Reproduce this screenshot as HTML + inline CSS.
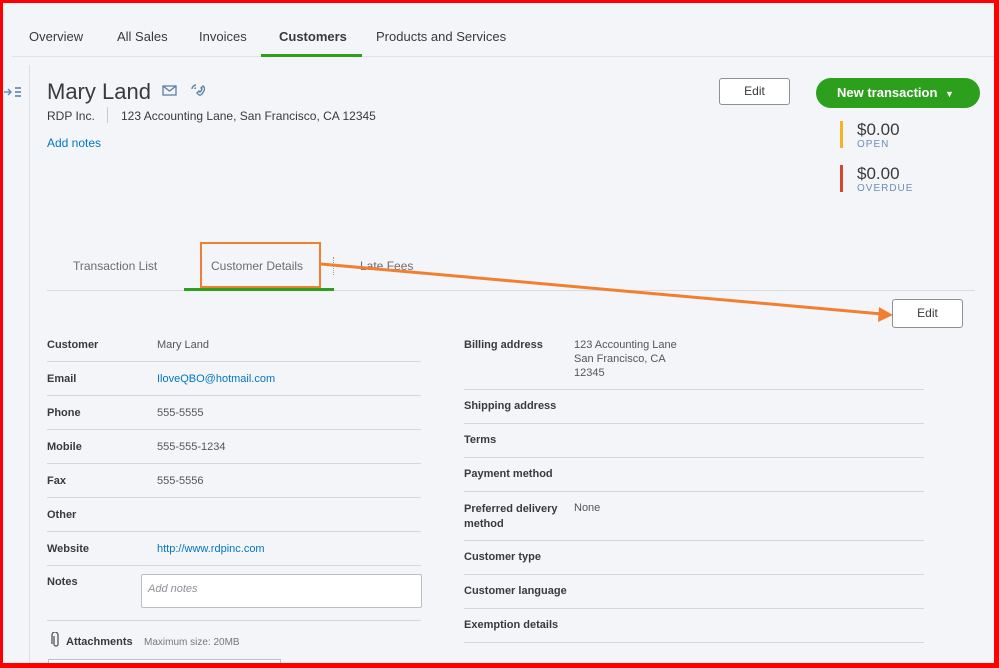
<!DOCTYPE html>
<html><head><meta charset="utf-8"><style>
*{margin:0;padding:0;box-sizing:border-box}
html,body{width:999px;height:668px;overflow:hidden}
body{background:#f4f5f8;font-family:"Liberation Sans",sans-serif;color:#393a3d;position:relative}
.a{position:absolute;white-space:nowrap}
.nav{font-size:13px;color:#393a3d;top:29px}
.l{font-size:11px;font-weight:bold;color:#393a3d}
.v{font-size:11px;color:#555}
.hl{position:absolute;height:1px;background:#d4d7dc}
.blue{color:#0077c5}
</style></head><body>
<div class="a nav" style="left:29px">Overview</div>
<div class="a nav" style="left:117px">All Sales</div>
<div class="a nav" style="left:199px">Invoices</div>
<div class="a nav" style="left:279px;font-weight:bold">Customers</div>
<div class="a nav" style="left:376px">Products and Services</div>
<div class="hl" style="left:12px;top:56px;width:982px;background:#e0e2e6"></div>
<div class="a" style="left:261px;top:54px;width:101px;height:3px;background:#2ca01c"></div>
<div class="a" style="left:29px;top:65px;width:1px;height:603px;background:#dcdfe3"></div>
<svg class="a" style="left:4px;top:86px" width="18" height="12" viewBox="0 0 18 12"><path d="M0 6h7M4 3l3 3-3 3" fill="none" stroke="#6b8fb5" stroke-width="1.5"/><path d="M11 2h6M11 6h6M11 10h6" stroke="#6b8fb5" stroke-width="1.8"/></svg>
<div class="a" style="left:47px;top:79px;font-size:22px;color:#393a3d">Mary Land</div>
<svg class="a" style="left:162px;top:85px" width="15" height="11" viewBox="0 0 15 11"><rect x="1" y="1" width="13" height="9" fill="none" stroke="#5a7fa8" stroke-width="1.3"/><path d="M1 1l6.5 5 6.5-5" fill="none" stroke="#5a7fa8" stroke-width="1.3"/></svg>
<svg class="a" style="left:189px;top:82px" width="16" height="16" viewBox="0 0 16 16"><path d="M4 13c-2-2-1-3 0-4l1-1 2 2-1 1c1 1 2 2 3 2l1-1 2 2-1 1c-1 1-3 1-7-2zM9 3c2 0 4 2 4 4M9 6c1 0 1 0 1 1" fill="none" stroke="#5a7fa8" stroke-width="1.4" transform="rotate(-90 8 8)"/></svg>
<div class="a" style="left:47px;top:109px;font-size:12px">RDP Inc.</div>
<div class="a" style="left:107px;top:107px;width:1px;height:16px;background:#c8ccd1"></div>
<div class="a" style="left:121px;top:109px;font-size:12px">123 Accounting Lane, San Francisco, CA 12345</div>
<div class="a blue" style="left:47px;top:136px;font-size:12px">Add notes</div>
<div class="a" style="left:719px;top:78px;width:71px;height:27px;border:1px solid #8d9096;border-radius:3px;background:#fff;font-size:12px;text-align:center;line-height:25px">Edit</div>
<div class="a" style="left:816px;top:78px;width:164px;height:30px;border-radius:15px;background:#2ca01c;color:#fff;font-size:13px;font-weight:bold;line-height:30px;padding-left:21px">New transaction <span style="font-size:9px;margin-left:4px">▼</span></div>
<div class="a" style="left:840px;top:121px;width:3px;height:27px;background:#f4b428"></div>
<div class="a" style="left:857px;top:120px;font-size:17px">$0.00</div>
<div class="a" style="left:857px;top:139px;font-size:10px;color:#6b8fb5;letter-spacing:1px">OPEN</div>
<div class="a" style="left:840px;top:165px;width:3px;height:27px;background:#d4492d"></div>
<div class="a" style="left:857px;top:164px;font-size:17px">$0.00</div>
<div class="a" style="left:857px;top:183px;font-size:10px;color:#6b8fb5;letter-spacing:1px">OVERDUE</div>
<div class="a" style="left:73px;top:259px;font-size:12px;color:#6b6c72">Transaction List</div>
<div class="a" style="left:211px;top:259px;font-size:12px;color:#6b6c72">Customer Details</div>
<div class="a" style="left:360px;top:259px;font-size:12px;color:#6b6c72">Late Fees</div>
<div class="a" style="left:333px;top:257px;width:1px;height:18px;border-left:1px dotted #999"></div>
<div class="hl" style="left:47px;top:290px;width:928px;background:#d9dbdf"></div>
<div class="a" style="left:184px;top:288px;width:150px;height:3px;background:#2ca01c"></div>
<div class="a" style="left:200px;top:242px;width:121px;height:46px;border:2px solid #f08030"></div>
<svg class="a" style="left:0;top:0" width="999" height="668"><line x1="321" y1="264" x2="882" y2="314" stroke="#f08030" stroke-width="3"/><polygon points="893,315 879,307 878,322" fill="#f08030"/></svg>
<div class="a" style="left:892px;top:299px;width:71px;height:29px;border:1px solid #8d9096;border-radius:3px;background:#fff;font-size:12px;text-align:center;line-height:27px">Edit</div>

<div class="a l" style="left:47px;top:339px">Customer</div><div class="a v" style="left:157px;top:339px">Mary Land</div><div class="hl" style="left:47px;top:361px;width:374px"></div>
<div class="a l" style="left:47px;top:373px">Email</div><div class="a v blue" style="left:157px;top:373px">IloveQBO@hotmail.com</div><div class="hl" style="left:47px;top:395px;width:374px"></div>
<div class="a l" style="left:47px;top:407px">Phone</div><div class="a v" style="left:157px;top:407px">555-5555</div><div class="hl" style="left:47px;top:429px;width:374px"></div>
<div class="a l" style="left:47px;top:441px">Mobile</div><div class="a v" style="left:157px;top:441px">555-555-1234</div><div class="hl" style="left:47px;top:463px;width:374px"></div>
<div class="a l" style="left:47px;top:475px">Fax</div><div class="a v" style="left:157px;top:475px">555-5556</div><div class="hl" style="left:47px;top:497px;width:374px"></div>
<div class="a l" style="left:47px;top:509px">Other</div><div class="hl" style="left:47px;top:531px;width:374px"></div>
<div class="a l" style="left:47px;top:543px">Website</div><div class="a v blue" style="left:157px;top:543px">http://www.rdpinc.com</div><div class="hl" style="left:47px;top:565px;width:374px"></div>
<div class="a l" style="left:47px;top:576px">Notes</div>
<div class="a" style="left:141px;top:574px;width:281px;height:34px;border:1px solid #babec5;background:#fff;border-radius:2px;font-size:11px;font-style:italic;color:#8d9096;padding:8px 6px">Add notes</div>
<div class="hl" style="left:47px;top:620px;width:374px"></div>
<svg class="a" style="left:51px;top:632px" width="10" height="16" viewBox="0 0 10 16"><path d="M3 4v8a2 2 0 004 0V3a3 3 0 00-6 0v9" fill="none" stroke="#555" stroke-width="1.3"/></svg>
<div class="a l" style="left:66px;top:636px;font-weight:bold">Attachments</div>
<div class="a" style="left:144px;top:637px;font-size:10px;color:#777">Maximum size: 20MB</div>
<div class="a" style="left:48px;top:659px;width:233px;height:6px;border:1px solid #babec5;border-bottom:none;background:#fff"></div>

<div class="a l" style="left:464px;top:339px">Billing address</div>
<div class="a v" style="left:574px;top:338px;line-height:14px">123 Accounting Lane<br>San Francisco, CA<br>12345</div>
<div class="hl" style="left:464px;top:389px;width:460px"></div>
<div class="a l" style="left:464px;top:400px">Shipping address</div><div class="hl" style="left:464px;top:423px;width:460px"></div>
<div class="a l" style="left:464px;top:434px">Terms</div><div class="hl" style="left:464px;top:457px;width:460px"></div>
<div class="a l" style="left:464px;top:468px">Payment method</div><div class="hl" style="left:464px;top:491px;width:460px"></div>
<div class="a l" style="left:464px;top:502px;line-height:15px">Preferred delivery<br>method</div><div class="a v" style="left:574px;top:502px">None</div><div class="hl" style="left:464px;top:540px;width:460px"></div>
<div class="a l" style="left:464px;top:551px">Customer type</div><div class="hl" style="left:464px;top:574px;width:460px"></div>
<div class="a l" style="left:464px;top:585px">Customer language</div><div class="hl" style="left:464px;top:608px;width:460px"></div>
<div class="a l" style="left:464px;top:619px">Exemption details</div><div class="hl" style="left:464px;top:642px;width:460px"></div>

<div class="a" style="left:0;top:0;width:999px;height:668px;border-style:solid;border-color:#f00;border-width:3px 5px 5px 3px"></div>
</body></html>
